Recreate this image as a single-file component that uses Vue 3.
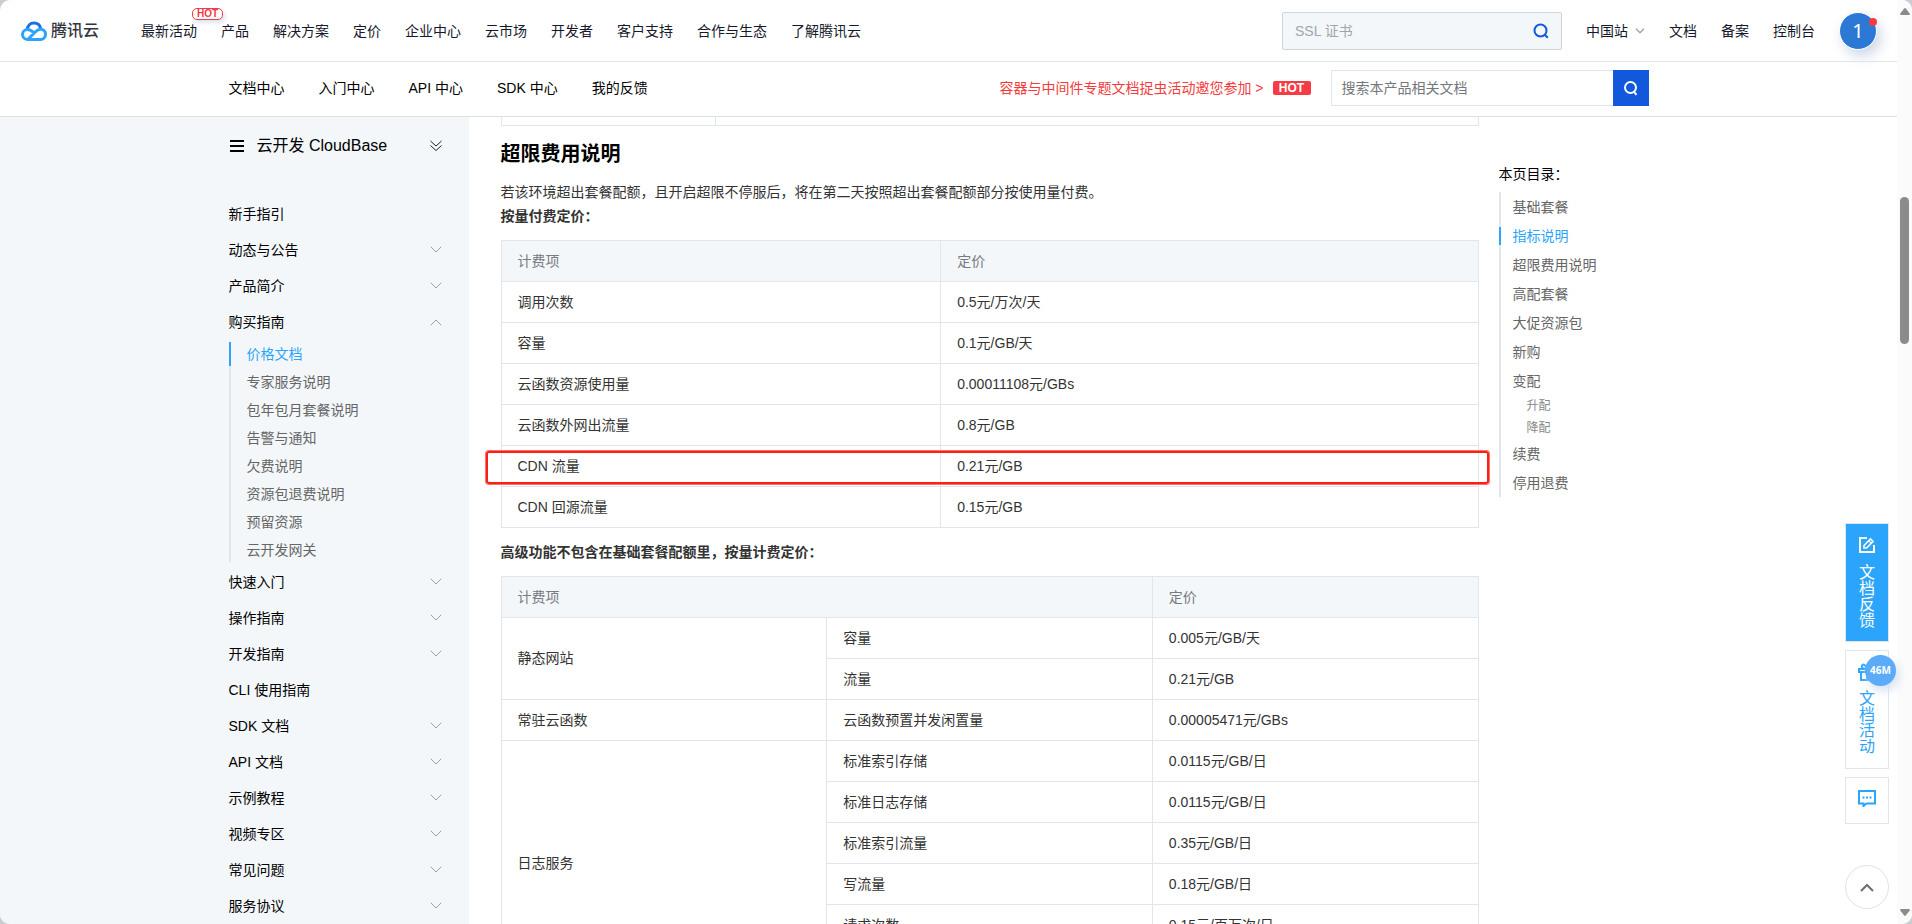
<script setup>
const topNav = ['最新活动', '产品', '解决方案', '定价', '企业中心', '云市场', '开发者', '客户支持', '合作与生态', '了解腾讯云']
const topLinks = ['文档', '备案', '控制台']
const docNav = ['文档中心', '入门中心', 'API 中心', 'SDK 中心', '我的反馈']

const menu = [
  { label: '新手指引' },
  { label: '动态与公告', group: true },
  { label: '产品简介', group: true },
  {
    label: '购买指南',
    group: true,
    children: ['价格文档', '专家服务说明', '包年包月套餐说明', '告警与通知', '欠费说明', '资源包退费说明', '预留资源', '云开发网关'],
  },
  { label: '快速入门', group: true },
  { label: '操作指南', group: true },
  { label: '开发指南', group: true },
  { label: 'CLI 使用指南' },
  { label: 'SDK 文档', group: true },
  { label: 'API 文档', group: true },
  { label: '示例教程', group: true },
  { label: '视频专区', group: true },
  { label: '常见问题', group: true },
  { label: '服务协议', group: true },
]
const activeDoc = '价格文档'

const usagePrices = [
  ['调用次数', '0.5元/万次/天'],
  ['容量', '0.1元/GB/天'],
  ['云函数资源使用量', '0.00011108元/GBs'],
  ['云函数外网出流量', '0.8元/GB'],
  ['CDN 流量', '0.21元/GB'],
  ['CDN 回源流量', '0.15元/GB'],
]

const advancedPrices = [
  { name: '静态网站', items: [['容量', '0.005元/GB/天'], ['流量', '0.21元/GB']] },
  { name: '常驻云函数', items: [['云函数预置并发闲置量', '0.00005471元/GBs']] },
  {
    name: '日志服务',
    items: [
      ['标准索引存储', '0.0115元/GB/日'],
      ['标准日志存储', '0.0115元/GB/日'],
      ['标准索引流量', '0.35元/GB/日'],
      ['写流量', '0.18元/GB/日'],
      ['请求次数', '0.15元/百万次/日'],
      ['', ''],
    ],
  },
]

const toc = [
  { label: '基础套餐' },
  { label: '指标说明', active: true },
  { label: '超限费用说明' },
  { label: '高配套餐' },
  { label: '大促资源包' },
  { label: '新购' },
  { label: '变配' },
  { label: '升配', sub: true },
  { label: '降配', sub: true },
  { label: '续费' },
  { label: '停用退费' },
]
</script>

<template>
  <div class="window">
    <div class="page">
      <header class="topbar">
        <a class="logo" href="#">
          <svg viewBox="0 0 26 20" width="26" height="20" fill="none" stroke-width="3" aria-hidden="true">
            <path d="M6.2 9.2C6.4 4.6 9.4 2 13 2c3.300 0 6 2.100 6.600 5.400" stroke="#1a6fe8" />
            <path d="M13.200 12.200C10.800 9.800 8.800 8.600 6.500 8.600c-2.800 0-5 2-5 4.900s2.200 4.900 5 4.900h13c2.900 0 5-2.300 5-5.100 0-2.900-2.200-5.100-5-5.100-1.900 0-3.400.9-5 2.500L7.600 17.600" stroke="#2ea3fb" />
          </svg>
          <span>腾讯云</span>
        </a>
        <nav class="top-nav">
          <a v-for="(item, i) in topNav" :key="item" href="#">{{ item }}<span v-if="i === 0" class="hot-outline">HOT</span></a>
        </nav>
        <form class="top-search" @submit.prevent>
          <input type="search" placeholder="SSL 证书" aria-label="搜索" />
          <button type="submit" aria-label="搜索">
            <svg viewBox="0 0 16 16" width="16" height="16" fill="none" stroke="#1258dc" stroke-width="2"><circle cx="7.500" cy="7.500" r="6" /><path d="M11.500 11.500l3.300 3.300" /></svg>
          </button>
        </form>
        <div class="top-links">
          <button type="button" class="site">
            中国站
            <svg viewBox="0 0 10 6" width="10" height="6" fill="none" stroke="#a3a6ad" stroke-width="1.500"><path d="M1 .8l4 4 4-4" /></svg>
          </button>
          <a v-for="item in topLinks" :key="item" href="#">{{ item }}</a>
        </div>
        <button type="button" class="avatar">1<i></i></button>
      </header>

      <div class="docbar">
        <nav class="doc-nav">
          <a v-for="item in docNav" :key="item" href="#">{{ item }}</a>
        </nav>
        <a class="promo" href="#">容器与中间件专题文档捉虫活动邀您参加 &gt;<b>HOT</b></a>
        <form class="doc-search" @submit.prevent>
          <input type="search" placeholder="搜索本产品相关文档" aria-label="搜索本产品相关文档" />
          <button type="submit" aria-label="搜索文档">
            <svg viewBox="0 0 16 16" width="16" height="16" fill="none" stroke="#fff" stroke-width="2"><circle cx="7.500" cy="7.500" r="5.500" /><path d="M10.500 11l3 3.800" /></svg>
          </button>
        </form>
      </div>

      <div class="body">
        <aside class="sidebar">
          <div class="side-title">
            <svg viewBox="0 0 14 12" width="14" height="12" stroke="#000" stroke-width="2"><path d="M0 1h14M0 6h14M0 11h14" /></svg>
            <span>云开发 CloudBase</span>
            <button type="button" aria-label="展开全部">
              <svg viewBox="0 0 12 12" width="12" height="12" fill="none" stroke="#222" stroke-width="1"><path d="M.5 1L6 6l5.500-5M.5 5.500l5.500 5 5.500-5" /></svg>
            </button>
          </div>
          <ul class="menu">
            <li v-for="item in menu" :key="item.label">
              <a class="menu-item" href="#">
                <span>{{ item.label }}</span>
                <svg v-if="item.group" :class="{ up: item.children }" viewBox="0 0 12 8" width="12" height="8" fill="none" stroke="#989da6" stroke-width="1"><path d="M.8.8L6 6 11.200.8" /></svg>
              </a>
              <ul v-if="item.children" class="submenu">
                <li v-for="child in item.children" :key="child" :class="{ active: child === activeDoc }">
                  <a href="#">{{ child }}</a>
                </li>
              </ul>
            </li>
          </ul>
        </aside>

        <main class="article">
          <table class="prices tail">
            <tbody><tr><td class="narrow"></td><td></td></tr></tbody>
          </table>
          <h2>超限费用说明</h2>
          <p>若该环境超出套餐配额，且开启超限不停服后，将在第二天按照超出套餐配额部分按使用量付费。</p>
          <p class="strong">按量付费定价：</p>
          <div class="marked">
            <table class="prices">
              <thead><tr><th class="item">计费项</th><th>定价</th></tr></thead>
              <tbody>
                <tr v-for="row in usagePrices" :key="row[0]"><td>{{ row[0] }}</td><td>{{ row[1] }}</td></tr>
              </tbody>
            </table>
            <span class="mark"></span>
          </div>
          <p class="strong second">高级功能不包含在基础套餐配额里，按量计费定价：</p>
          <table class="prices">
            <thead><tr><th colspan="2">计费项</th><th class="third">定价</th></tr></thead>
            <tbody>
              <template v-for="service in advancedPrices" :key="service.name">
                <tr v-for="(item, i) in service.items" :key="item[0]">
                  <td v-if="i === 0" :rowspan="service.items.length">{{ service.name }}</td>
                  <td>{{ item[0] }}</td>
                  <td>{{ item[1] }}</td>
                </tr>
              </template>
            </tbody>
          </table>
        </main>

        <aside class="toc">
          <h3>本页目录：</h3>
          <ul>
            <li v-for="item in toc" :key="item.label" :class="{ active: item.active, sub: item.sub }">
              <a href="#">{{ item.label }}</a>
            </li>
          </ul>
        </aside>
      </div>
    </div>

    <div class="scrollbar" aria-hidden="true">
      <svg viewBox="0 0 10 7" width="10" height="7" fill="#8b8b8b"><path d="M4.200.5q.8-.8 1.600 0L9.700 5.500q.5 1.500-1 1.500H1.300Q-.2 7 .3 5.500z" /></svg>
      <div class="track"><div class="thumb"></div></div>
      <svg viewBox="0 0 10 7" width="10" height="7" fill="#8b8b8b"><path d="M4.200 6.500q.8.8 1.600 0L9.700 1.500Q10.200 0 8.700 0H1.300Q-.2 0 .3 1.500z" /></svg>
    </div>

    <div class="floats">
      <button type="button" class="float filled">
        <svg viewBox="0 0 16 16" width="16" height="16" fill="none" stroke="#fff" stroke-width="2"><path d="M8 1H1v14h14V8" /><path d="M5 11V8.500L11.500 2 14 4.500 7.500 11z" stroke-width="1.600" /><path d="M9.800 3.800l2.400 2.400" stroke-width="1.200" /></svg>
        <span>文档反馈</span>
      </button>
      <button type="button" class="float">
        <svg viewBox="0 0 18 18" width="18" height="18" fill="none" stroke="#2ba5fb" stroke-width="2"><path d="M1 6h16v3H1zM3 9v8h12V9M9 6v11M9 6C5 6 3 4.500 4 2.500S8 2 9 6c1-4 4-5.500 5-3.500S13 6 9 6" /></svg>
        <span>文档活动</span>
        <b class="meter">46M</b>
      </button>
      <button type="button" class="float chat" aria-label="在线咨询">
        <svg viewBox="0 0 18 17" width="18" height="17" fill="none" stroke="#2ba5fb" stroke-width="2"><path d="M1 1h16v12.500H8.500L5.500 16v-2.500H1z" /><path d="M4.500 7.500h2M8 7.500h2M11.500 7.500h2" /></svg>
      </button>
      <button type="button" class="to-top" aria-label="返回顶部">
        <svg viewBox="0 0 14 9" width="14" height="9" fill="none" stroke="#6a6e76" stroke-width="2"><path d="M1 8l6-6 6 6" /></svg>
      </button>
    </div>
  </div>
</template>

<style>
body {
  margin: 0;
  background: #c9ccd0;
}
</style>

<style scoped>
* {
  box-sizing: border-box;
}

.window {
  position: relative;
  display: flex;
  height: 100vh;
  overflow: hidden;
  border-radius: 10px;
  background: #fff;
  color: #000;
  font: 14px/20px "Liberation Sans", "Noto Sans CJK SC", sans-serif;
  --line: #e1e5ee;
  --blue: #2ba5fb;
  --gutter: calc((100vw - 15px - 1440px) / 2);
}

a {
  color: inherit;
  text-decoration: none;
}

button {
  padding: 0;
  border: 0;
  background: none;
  color: inherit;
  font: inherit;
}

input {
  flex: 1;
  min-width: 0;
  padding: 0 10px;
  border: 0;
  outline: 0;
  background: none;
  font: inherit;
}

ul {
  margin: 0;
  padding: 0;
  list-style: none;
}

svg {
  display: block;
  flex: none;
}

.page {
  display: flex;
  flex: 1;
  flex-direction: column;
  min-width: 0;
}

.topbar {
  display: flex;
  flex: none;
  align-items: center;
  height: 62px;
  padding: 0 20px 0 21px;
  border-bottom: 1px solid var(--line);
  color: #16182b;
  white-space: nowrap;
}

.logo {
  display: flex;
  align-items: center;
  gap: 4px;
  width: 120px;
  color: #33363f;
  font-size: 16px;
  font-weight: 500;
}

.top-nav {
  display: flex;
  flex: 1;
  gap: 24px;
}

.top-nav a {
  position: relative;
}

.hot-outline {
  position: absolute;
  top: -13px;
  left: 51px;
  width: 31px;
  border: 1px solid #f03c46;
  border-radius: 5px;
  background: #fff;
  box-shadow: 2px 3px 4px #dfe4ee;
  color: #f03c46;
  font-size: 10px;
  font-weight: 700;
  line-height: 10px;
  text-align: center;
}

.top-search {
  display: flex;
  width: 280px;
  height: 38px;
  border: 1px solid #cfd5de;
  border-radius: 2px;
  background: #f3f7fa;
}

.top-search input {
  padding-left: 12px;
}

.top-search input::placeholder {
  color: #a2a5aa;
  opacity: 1;
}

.top-search button {
  display: flex;
  align-items: center;
  justify-content: center;
  width: 40px;
}

.top-links {
  display: flex;
  gap: 24px;
  margin-left: 24px;
}

.site {
  display: flex;
  align-items: center;
  gap: 7px;
}

.avatar {
  position: relative;
  width: 38px;
  height: 38px;
  margin-left: 24px;
  border: 1px solid #fff;
  border-radius: 50%;
  background: #2b78d5;
  box-shadow: 4px 6px 14px #ccd6e6;
  color: #fff;
  font: 20px/36px "Noto Sans", sans-serif;
}

.avatar i {
  position: absolute;
  top: 5px;
  right: -1px;
  width: 8px;
  height: 8px;
  border-radius: 50%;
  background: #fb3a40;
}

.docbar {
  display: flex;
  flex: none;
  align-items: center;
  height: 55px;
  padding: 0 calc(var(--gutter) + 20px) 2px var(--gutter);
  border-bottom: 1px solid #dcdfe3;
  white-space: nowrap;
}

.doc-nav {
  display: flex;
  flex: 1;
  gap: 34px;
}

.promo {
  display: flex;
  align-items: center;
  color: #f23c3c;
}

.promo b {
  width: 38px;
  margin: 0 20px 0 9px;
  border-radius: 2px;
  background: #f63b44;
  color: #fff;
  font-size: 12px;
  line-height: 14px;
  text-align: center;
}

.doc-search {
  display: flex;
  width: 318px;
  height: 36px;
  border: 1px solid var(--line);
  border-right: 0;
}

.doc-search input::placeholder {
  color: #74777c;
  opacity: 1;
}

.doc-search button {
  display: flex;
  align-items: center;
  justify-content: center;
  width: 36px;
  margin: -1px 0;
  background: #1258dc;
}

.body {
  display: flex;
  flex: 1;
  min-height: 0;
  overflow: hidden;
  padding-right: var(--gutter);
}

.sidebar {
  flex: none;
  width: calc(var(--gutter) + 240px);
  padding: 13px 27px 0 var(--gutter);
  background: #f3f7fa;
}

.side-title {
  display: flex;
  align-items: center;
  height: 32px;
  padding-left: 1px;
  margin-bottom: 34px;
  font-size: 16px;
}

.side-title span {
  flex: 1;
  margin-left: 13px;
}

.menu-item {
  display: flex;
  align-items: center;
  justify-content: space-between;
  height: 36px;
}

.up {
  transform: rotate(180deg);
}

.submenu {
  margin: 2px 0;
  box-shadow: inset 2px 0 var(--line);
}

.submenu li {
  height: 24px;
  margin-bottom: 4px;
  padding-left: 18px;
  color: #666;
  line-height: 24px;
}

.submenu li:last-child {
  margin-bottom: 0;
}

.submenu .active {
  box-shadow: inset 2px 0 var(--blue);
  color: var(--blue);
}

.article {
  flex: 1;
  min-width: 0;
  margin: 0 20px 0 32px;
  color: #333;
}

.prices {
  width: 100%;
  border-collapse: collapse;
  table-layout: fixed;
}

.prices th,
.prices td {
  height: 41px;
  padding: 0 16px;
  border: 1px solid var(--line);
  text-align: left;
}

.prices th {
  background: #f3f7fa;
  color: #777b80;
  font-weight: 400;
}

.prices.tail td {
  height: 8px;
  border-top: 0;
}

.narrow {
  width: 22%;
}

.item {
  width: 45%;
}

.third {
  width: 33.333%;
}

h2 {
  margin: 13px 0 11px;
  color: #000;
  font-size: 20px;
  line-height: 30px;
}

p {
  margin: 0;
  line-height: 24px;
}

.strong {
  margin-bottom: 12px;
  font-weight: 700;
}

.second {
  margin-top: 12px;
}

.marked {
  position: relative;
}

.mark {
  position: absolute;
  top: 211px;
  right: -10px;
  left: -15px;
  height: 33px;
  border: 2px solid #fb2014;
  border-radius: 3px;
  box-shadow: 0 0 0 1px #ff7068;
}

.toc {
  width: 170px;
  padding-top: 47px;
}

h3 {
  margin: 0 0 8px;
  font-size: 14px;
  font-weight: 400;
}

.toc ul {
  box-shadow: inset 2px 0 var(--line);
}

.toc li {
  display: flex;
  align-items: center;
  height: 29px;
  color: #666;
}

.toc a {
  padding-left: 14px;
  line-height: 18px;
}

.toc .active a {
  box-shadow: inset 2px 0 var(--blue);
  color: var(--blue);
}

.toc .sub {
  height: 22px;
  padding-left: 14px;
  color: #888;
  font-size: 12px;
}

.scrollbar {
  display: flex;
  flex: none;
  flex-direction: column;
  align-items: center;
  width: 15px;
  padding: 8px 0;
  background: #fbfbfb;
}

.track {
  display: flex;
  flex: 1;
  flex-direction: column;
  padding-top: 182px;
}

.thumb {
  width: 9px;
  height: 147px;
  border-radius: 5px;
  background: #8b8b8b;
}

.floats {
  position: absolute;
  right: 23px;
  bottom: 15px;
  display: flex;
  flex-direction: column;
  gap: 8px;
}

.float {
  position: relative;
  display: flex;
  flex-direction: column;
  align-items: center;
  gap: 10px;
  width: 44px;
  height: 119px;
  padding-top: 12px;
  border: 1px solid var(--line);
  background: #fff;
  color: var(--blue);
  font-size: 16px;
  line-height: 16px;
}

.float span {
  width: 16px;
  word-break: break-all;
}

.filled {
  gap: 12px;
  padding-top: 13px;
  background: var(--blue);
  color: #fff;
}

.chat {
  height: 47px;
}

.meter {
  position: absolute;
  top: 4px;
  right: -8px;
  width: 31px;
  height: 31px;
  border-radius: 50%;
  background: #5aacf8;
  box-shadow: 3px 5px 10px #d5e1f0;
  color: #fff;
  font: 700 10px/31px "Open Sans", sans-serif;
}

.to-top {
  display: flex;
  align-items: center;
  justify-content: center;
  width: 44px;
  height: 44px;
  margin-top: 33px;
  border: 1px solid #dde3ea;
  border-radius: 50%;
  background: #fff;
}
</style>
